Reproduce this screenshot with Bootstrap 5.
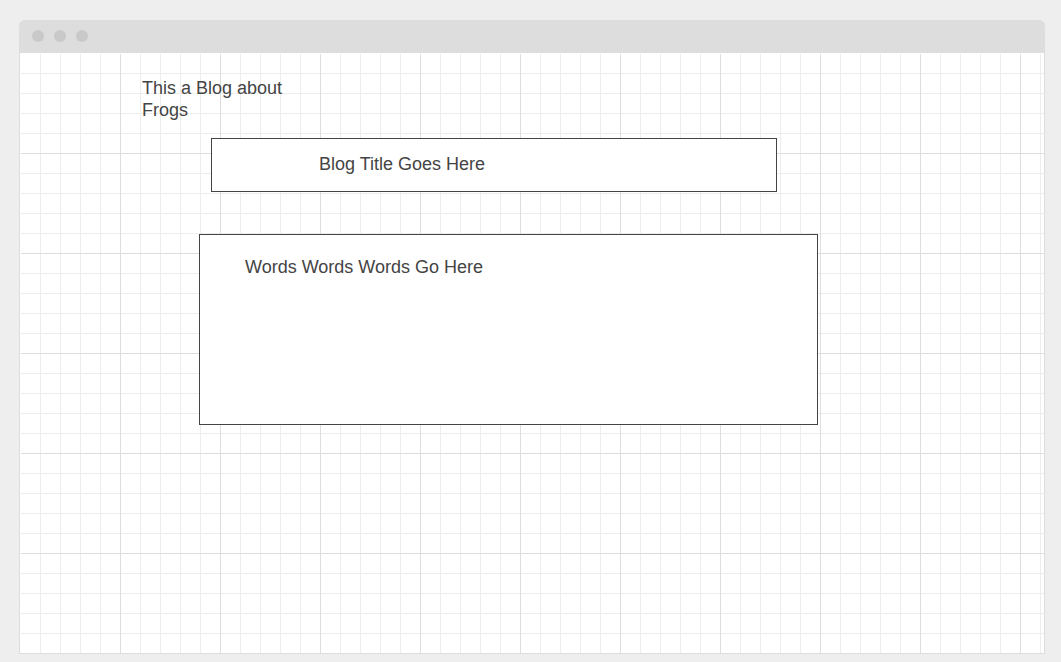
<!DOCTYPE html>
<html lang="en">
<head>
<meta charset="utf-8">
<meta name="viewport" content="width=device-width, initial-scale=1">
<title>Frog blog wireframe</title>
<link href="https://cdn.jsdelivr.net/npm/bootstrap@5.3.0/dist/css/bootstrap.min.css" rel="stylesheet">
<style>
  body {
    background: #eee;
    color: #444;
    font-family: "Liberation Sans", Arial, sans-serif;
    font-size: 18px;
    line-height: 22px;
    padding: 20px 16px 8px 19px;
  }
  .browser-bar {
    background: #ddd;
    height: 33px;
    padding: 0 13px 1px;
    gap: 10px;
    border-radius: 6px 6px 0 0;
  }
  .window-dot { width: 12px; height: 12px; background: #c9c9c9; }
  .browser-page {
    background: #fff;
    border: 1px solid #ddd;
    border-top: 0;
    padding: 1px 0 0 1px;
  }
  /* fine lines every 20px, stronger ones every 100px */
  .grid-sheet {
    padding-top: 23px;
    background-image:
      linear-gradient(to right, transparent 99px, #dedede 99px),
      linear-gradient(to bottom, transparent 99px, #dedede 99px),
      linear-gradient(to right, transparent 19px, #ededed 19px),
      linear-gradient(to bottom, transparent 19px, #ededed 19px);
    background-size: 100px 100px, 100px 100px, 20px 20px, 20px 20px;
  }
  .site-name { font-size: 18px; line-height: 22px; max-width: 160px; margin: 0 0 17px 121px; }
  .wire-box { background: #fff; border: 1px solid #444; }
  .title-box { margin: 0 267px 42px 190px; padding: 14px 107px 16px; }
  .title-box h2 { font-size: 18px; line-height: 22px; }
  .words-box { margin: 0 226px 0 178px; padding: 21px 45px; min-height: 191px; }
</style>
</head>
<body class="min-vh-100 d-flex flex-column">
  <header class="browser-bar d-flex align-items-center">
    <span class="window-dot rounded-circle"></span>
    <span class="window-dot rounded-circle"></span>
    <span class="window-dot rounded-circle"></span>
  </header>
  <div class="browser-page flex-grow-1 d-flex flex-column">
    <main class="grid-sheet flex-grow-1">
      <h1 class="site-name fw-normal">This a Blog about Frogs</h1>
      <section class="wire-box title-box">
        <h2 class="fw-normal mb-0">Blog Title Goes Here</h2>
      </section>
      <section class="wire-box words-box">
        <p class="mb-0">Words Words Words Go Here</p>
      </section>
    </main>
  </div>
<script src="https://cdn.jsdelivr.net/npm/bootstrap@5.3.0/dist/js/bootstrap.bundle.min.js"></script>
</body>
</html>
